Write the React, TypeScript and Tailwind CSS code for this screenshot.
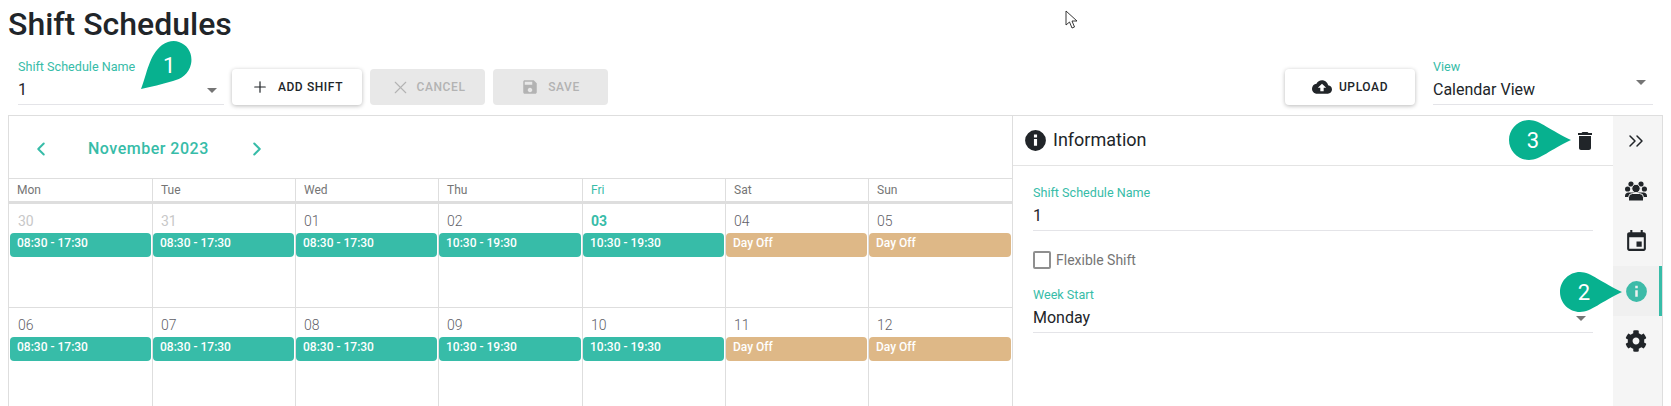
import type { ReactNode } from 'react';
import { ChevronLeft, ChevronRight, ChevronsRight, Plus, X } from 'lucide-react';
import { FaCog } from 'react-icons/fa';

const TEAL = 'text-[#37bca8]';

const weeks = [
  [
    { d: '30', t: '08:30 - 17:30', muted: true },
    { d: '31', t: '08:30 - 17:30', muted: true },
    { d: '01', t: '08:30 - 17:30' },
    { d: '02', t: '10:30 - 19:30' },
    { d: '03', t: '10:30 - 19:30', today: true },
    { d: '04', t: 'Day Off', off: true },
    { d: '05', t: 'Day Off', off: true },
  ],
  [
    { d: '06', t: '08:30 - 17:30' },
    { d: '07', t: '08:30 - 17:30' },
    { d: '08', t: '08:30 - 17:30' },
    { d: '09', t: '10:30 - 19:30' },
    { d: '10', t: '10:30 - 19:30' },
    { d: '11', t: 'Day Off', off: true },
    { d: '12', t: 'Day Off', off: true },
  ],
];

const days = ['Mon', 'Tue', 'Wed', 'Thu', 'Fri', 'Sat', 'Sun'];
const COLS = 'grid grid-cols-[143px_143px_143px_144px_143px_143px_144px]';

function Field({ label, value, className, caretClass }: { label: string; value: string; className: string; caretClass?: string }) {
  return (
    <div className={`relative border-b border-[#e4e4e8] ${className}`}>
      <div className={`text-[12.6px] leading-[14px] ${TEAL}`}>{label}</div>
      <div className="text-base leading-6 text-[#212529] mt-1 pb-[2px]">{value}</div>
      <div className={`absolute right-[7px] flex ${caretClass ?? 'bottom-[11px]'}`}>
        <span className="w-0 h-0 border-x-[5px] border-x-transparent border-t-[5px] border-t-[#757575]" />
      </div>
    </div>
  );
}

function ActionButton({ icon, label, disabled, className }: { icon: ReactNode; label: string; disabled?: boolean; className: string }) {
  return (
    <button
      className={`h-9 rounded flex items-center justify-center text-xs font-medium tracking-[0.6px] ${className} ${
        disabled ? 'bg-[#e8e8e8] text-[#b3b3b3]' : 'bg-white text-[#212529] shadow-[0_1px_4px_rgba(0,0,0,0.28)]'
      }`}
    >
      {icon}
      {label}
    </button>
  );
}

// teardrop callout, tip points right
function Callout({ n, className }: { n: string; className: string }) {
  return (
    <div className={`absolute w-[62px] h-10 flex items-center ${className}`}>
      <svg viewBox="0 0 62 40" className="absolute inset-0 w-[62px] h-10">
        <path d="M20 0C31 0 42 11 62 20C42 29 31 40 20 40C9 40 0 31 0 20C0 9 9 0 20 0Z" fill="#07b18f" />
      </svg>
      <span className="relative w-12 text-center text-[22px] text-white">{n}</span>
    </div>
  );
}

function RailItem({ children, active }: { children: ReactNode; active?: boolean }) {
  return (
    <div className={`h-[50px] flex items-center justify-center ${active ? 'bg-[#f0f0f0] border-r-[3px] border-r-[#37bca8] text-[#3dbba8]' : 'pr-[3px] text-[#212529]'}`}>
      {children}
    </div>
  );
}

export default function App() {
  return (
    <div className="relative w-[1671px] h-[406px] overflow-hidden bg-white font-['Roboto',sans-serif] text-[#212529]">
      <h1 className="pl-2 pt-[4px] h-[65px] text-[32px] leading-[40px] font-medium">Shift Schedules</h1>

      {/* toolbar */}
      <div className="flex items-end h-[40px] pl-[18px] pr-[18px]">
        <Field label="Shift Schedule Name" value="1" className="w-[206px]" />
        <ActionButton className="w-[130px] ml-2 gap-[9px]" label="ADD SHIFT" icon={<Plus size={18} strokeWidth={1.6} />} />
        <ActionButton className="w-[115px] ml-2 gap-[6px]" label="CANCEL" disabled icon={<X size={21} strokeWidth={1.3} />} />
        <ActionButton
          className="w-[115px] ml-2 gap-[9px]"
          label="SAVE"
          disabled
          icon={
            <svg viewBox="0 0 24 24" className="w-[18px] h-[18px] fill-current">
              <path d="M17 3H5c-1.11 0-2 .9-2 2v14c0 1.100.89 2 2 2h14c1.100 0 2-.9 2-2V7l-4-4zm-5 16c-1.660 0-3-1.340-3-3s1.340-3 3-3 3 1.340 3 3-1.340 3-3 3zm3-10H5V5h10v4z" />
            </svg>
          }
        />
        <ActionButton
          className="w-[130px] ml-auto gap-[7px]"
          label="UPLOAD"
          icon={
            <svg viewBox="0 0 24 24" className="w-5 h-5 fill-current">
              <path d="M19.350 10.040C18.670 6.590 15.640 4 12 4 9.110 4 6.600 5.640 5.350 8.040 2.340 8.360 0 10.910 0 14c0 3.310 2.690 6 6 6h13c2.760 0 5-2.240 5-5 0-2.640-2.050-4.780-4.650-4.960zM14 13v4h-4v-4H7l5-5 5 5h-3z" />
            </svg>
          }
        />
        <Field label="View" value="Calendar View" className="w-[220px] ml-[18px]" caretClass="bottom-[19px]" />
      </div>

      {/* main */}
      <div className="flex ml-2 mt-[10px] h-[292px] w-[1655px] border-t border-l border-[#dedede]">
        <div className="w-[1004px] border-r border-[#dedede]">
          <div className="h-[63px] pt-[3px] border-b border-[#dedede] flex items-center">
            <ChevronLeft size={22} strokeWidth={2.2} className={`ml-[21px] ${TEAL}`} />
            <div className={`ml-[36px] w-[139px] text-base font-medium tracking-[0.5px] ${TEAL}`}>November 2023</div>
            <ChevronRight size={22} strokeWidth={2.2} className={`ml-[19px] ${TEAL}`} />
          </div>
          <div className={`${COLS} h-[25px] border-b-[3px] border-[#dedede]`}>
            {days.map((d, i) => (
              <div key={d} className={`pl-2 pt-[3px] text-xs leading-4 border-[#dedede] ${i > 0 ? 'border-l' : ''} ${d === 'Fri' ? TEAL : 'text-[#757575]'}`}>
                {d}
              </div>
            ))}
          </div>
          {weeks.map((w, wi) => (
            <div key={wi} className={`${COLS} ${wi === 0 ? 'h-[104px] border-b border-[#dedede]' : 'h-[100px]'}`}>
              {w.map((c, i) => (
                <div key={c.d} className={`pr-px border-[#dedede] ${i > 0 ? 'border-l' : 'pl-px'}`}>
                  <div className={`h-[29px] pl-[8px] pt-[7px] text-sm leading-5 ${c.muted ? 'text-[#c8c8c8]' : c.today ? `font-bold ${TEAL}` : 'font-light text-[#5f5f68]'}`}>{c.d}</div>
                  <div className={`h-6 rounded-[4px] pl-[7px] pt-[2px] text-xs leading-4 font-medium text-white ${c.off ? 'bg-[#deb887]' : 'bg-[#37bca8]'}`}>{c.t}</div>
                </div>
              ))}
            </div>
          ))}
        </div>

        {/* info panel */}
        <div className="w-[600px]">
          <div className="h-[50px] border-b border-[#e4e4e4] flex items-center pl-[10px] pr-[16px]">
            <svg viewBox="0 0 24 24" className="w-[25px] h-[25px] fill-[#212529]">
              <path d="M12 2a10 10 0 1 0 0 20 10 10 0 0 0 0-20Zm1.500 15h-3v-6.500h3V17Zm0-8h-3V6.200h3V9Z" />
            </svg>
            <span className="ml-[5px] pb-[2px] text-lg">Information</span>
            <svg viewBox="0 0 24 24" className="ml-auto w-6 h-6 fill-[#212529]">
              <path d="M6 19c0 1.100.9 2 2 2h8c1.100 0 2-.9 2-2V7H6v12zM19 4h-3.500l-1-1h-5l-1 1H5v2h14V4z" />
            </svg>
          </div>
          <div className="px-5 pt-[20px]">
            <Field label="Shift Schedule Name" value="1" className="w-full" caretClass="hidden" />
            <div className="flex items-center h-[18px] mt-[20px] text-sm text-[#757575]">
              <span className="w-[18px] h-[18px] rounded-[2px] border-2 border-[#8f8f8f]" />
              <span className="ml-[5px]">Flexible Shift</span>
            </div>
            <Field label="Week Start" value="Monday" className="w-full mt-[19px]" />
          </div>
        </div>

        {/* side rail */}
        <div className="w-[50px] bg-[#f5f5f5] border-r border-[#dedede]">
          <RailItem><ChevronsRight size={24} strokeWidth={1.5} /></RailItem>
          <RailItem>
            <svg viewBox="0 0 22 20" className="w-[22px] h-5 fill-current">
              <circle cx="6" cy="3" r="2.600" />
              <circle cx="16" cy="3" r="2.600" />
              <circle cx="2.600" cy="8" r="2.600" />
              <circle cx="19.400" cy="8" r="2.600" />
              <path d="M0 15c0-2 1.500-3.500 3.500-3.500h15c2 0 3.500 1.500 3.500 3.500v1H0Z" />
              <circle cx="11" cy="7.500" r="4.200" stroke="#f5f5f5" strokeWidth="1" />
              <path d="M3.500 20v-3.500a4 4 0 0 1 4-4h7a4 4 0 0 1 4 4V20Z" stroke="#f5f5f5" strokeWidth="1" />
            </svg>
          </RailItem>
          <RailItem>
            <svg viewBox="0 0 24 24" className="w-[25px] h-[25px] fill-current">
              <path d="M17 12h-5v5h5v-5zM16 1v2H8V1H6v2H5c-1.110 0-1.990.9-1.990 2L3 19c0 1.100.89 2 2 2h14c1.100 0 2-.9 2-2V5c0-1.100-.9-2-2-2h-1V1h-2zm3 18H5V8h14v11z" />
            </svg>
          </RailItem>
          <RailItem active>
            <svg viewBox="0 0 24 24" className="w-[25px] h-[25px] fill-current">
              <path d="M12 2a10 10 0 1 0 0 20 10 10 0 0 0 0-20Zm1.200 15h-2.400v-6.300h2.400V17Zm0-8.200h-2.400V6.500h2.400v2.300Z" />
            </svg>
          </RailItem>
          <RailItem><FaCog size={22} /></RailItem>
        </div>
      </div>

      {/* annotation callouts */}
      <div className="absolute left-[141px] top-[41px] w-[51px] h-[48px]">
        <svg viewBox="0 0 51 48" className="absolute inset-0 w-[51px] h-[48px]">
          <path d="M0 48C6 33 8 14 21 4C27 0 33-1 38 1C47 4 52 13 50 23C48 33 40 38 32 40C21 43 10 46 0 48Z" fill="#07b18f" />
        </svg>
        <span className="absolute left-[22px] top-[13px] text-[22px] leading-6 text-white">1</span>
      </div>
      <Callout n="2" className="left-[1560px] top-[272px]" />
      <Callout n="3" className="left-[1509px] top-[120px]" />

      {/* mouse pointer */}
      <svg viewBox="0 0 14 20" className="absolute left-[1065px] top-[10px] w-[14px] h-[20px]">
        <path d="M1 1v14l3.500-3 2.500 6 2.500-1-2.500-6h5L1 1Z" fill="#fff" stroke="#222" strokeWidth="0.9" />
      </svg>
    </div>
  );
}
